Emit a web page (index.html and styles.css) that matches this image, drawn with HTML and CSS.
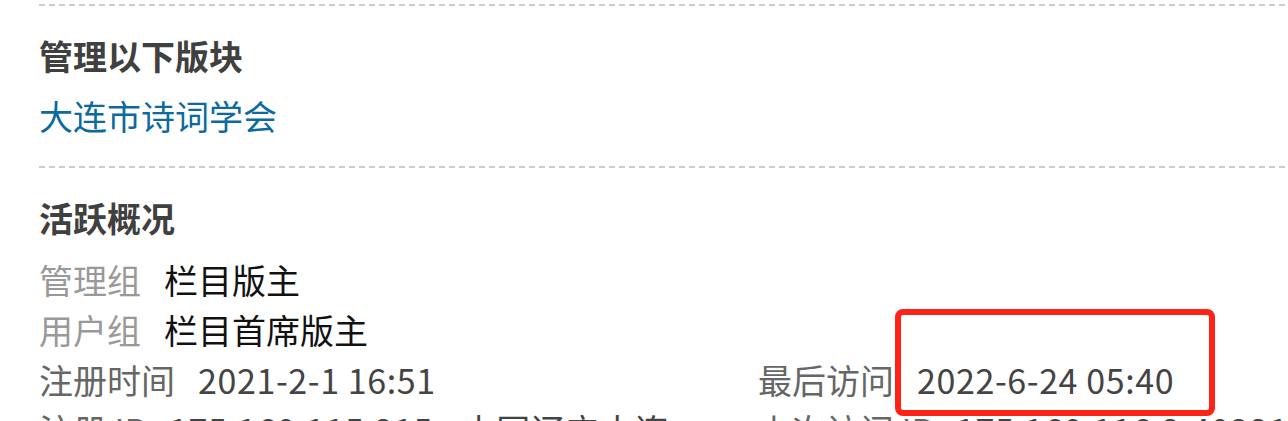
FILE: index.html
```html
<!DOCTYPE html>
<html lang="zh-CN">
<head>
<meta charset="utf-8">
<title>个人资料</title>
<link rel="stylesheet" href="styles.css">
</head>
<body>
<div class="page">
  <section class="block">
    <h2 class="block-title">管理以下版块</h2>
    <p class="block-row"><a class="forum-link" href="#">大连市诗词学会</a></p>
  </section>
  <section class="block">
    <h2 class="block-title">活跃概况</h2>
    <ul class="info-list">
      <li class="info-item"><em class="label label-light">管理组</em><span class="value value-dark">栏目版主</span></li>
      <li class="info-item"><em class="label label-light">用户组</em><span class="value value-dark">栏目首席版主</span></li>
      <li class="info-pair">
        <div class="info-item"><em class="label">注册时间</em><span class="value num">2021-2-1 16:51</span></div>
        <div class="info-item marked"><em class="label">最后访问</em><span class="value num">2022-6-24 05:40</span><span class="highlight-box"></span></div>
      </li>
      <li class="info-pair">
        <div class="info-item"><em class="label">注册 IP</em><span class="value num">175.160.115.215 - 中国辽宁大连</span></div>
        <div class="info-item"><em class="label">上次访问 IP</em><span class="value num">175.160.116.2:40221 - 中国辽宁大连</span></div>
      </li>
    </ul>
  </section>
</div>
</body>
</html>
```

FILE: styles.css
```css
html, body {
  margin: 0;
  padding: 0;
  background: #ffffff;
}

body {
  font-family: "Noto Sans CJK SC", "Noto Sans", sans-serif;
  font-size: 34px;
  color: #444444;
  overflow: hidden;
}

.page {
  padding: 4px 0 0 39px;
}

.block {
  position: relative;
  padding-top: 2px;
}

.block::before {
  content: "";
  position: absolute;
  left: 0;
  right: 0;
  top: 0;
  height: 2px;
  background: repeating-linear-gradient(to right, #cccccc 0 6px, transparent 6px 10px);
}

.block + .block {
  margin-top: 25px;
}

.block-title {
  margin: 25px 0 0;
  font-size: 34px;
  line-height: 50px;
  font-weight: 700;
  color: #404040;
}

.block-row {
  margin: 10px 0 0;
  line-height: 50px;
}

.forum-link {
  color: #0b6a9e;
  text-decoration: none;
}

.info-list {
  list-style: none;
  margin: 12px 0 0;
  padding: 0;
}

.info-item {
  display: flex;
  align-items: baseline;
  line-height: 50px;
  white-space: nowrap;
}

.info-pair {
  display: grid;
  grid-template-columns: 719px 1fr;
}

.label {
  font-style: normal;
  color: #666666;
  margin-right: 23px;
}

.label-light {
  color: #999999;
}

.value {
  color: #444444;
}

.num {
  letter-spacing: 0.6px;
}

.value-dark {
  color: #111111;
}

.marked {
  position: relative;
}

.highlight-box {
  position: absolute;
  left: 137px;
  top: -46px;
  width: 320px;
  height: 107px;
  box-sizing: border-box;
  border: 6px solid #ff2216;
  border-radius: 8px;
}
```
